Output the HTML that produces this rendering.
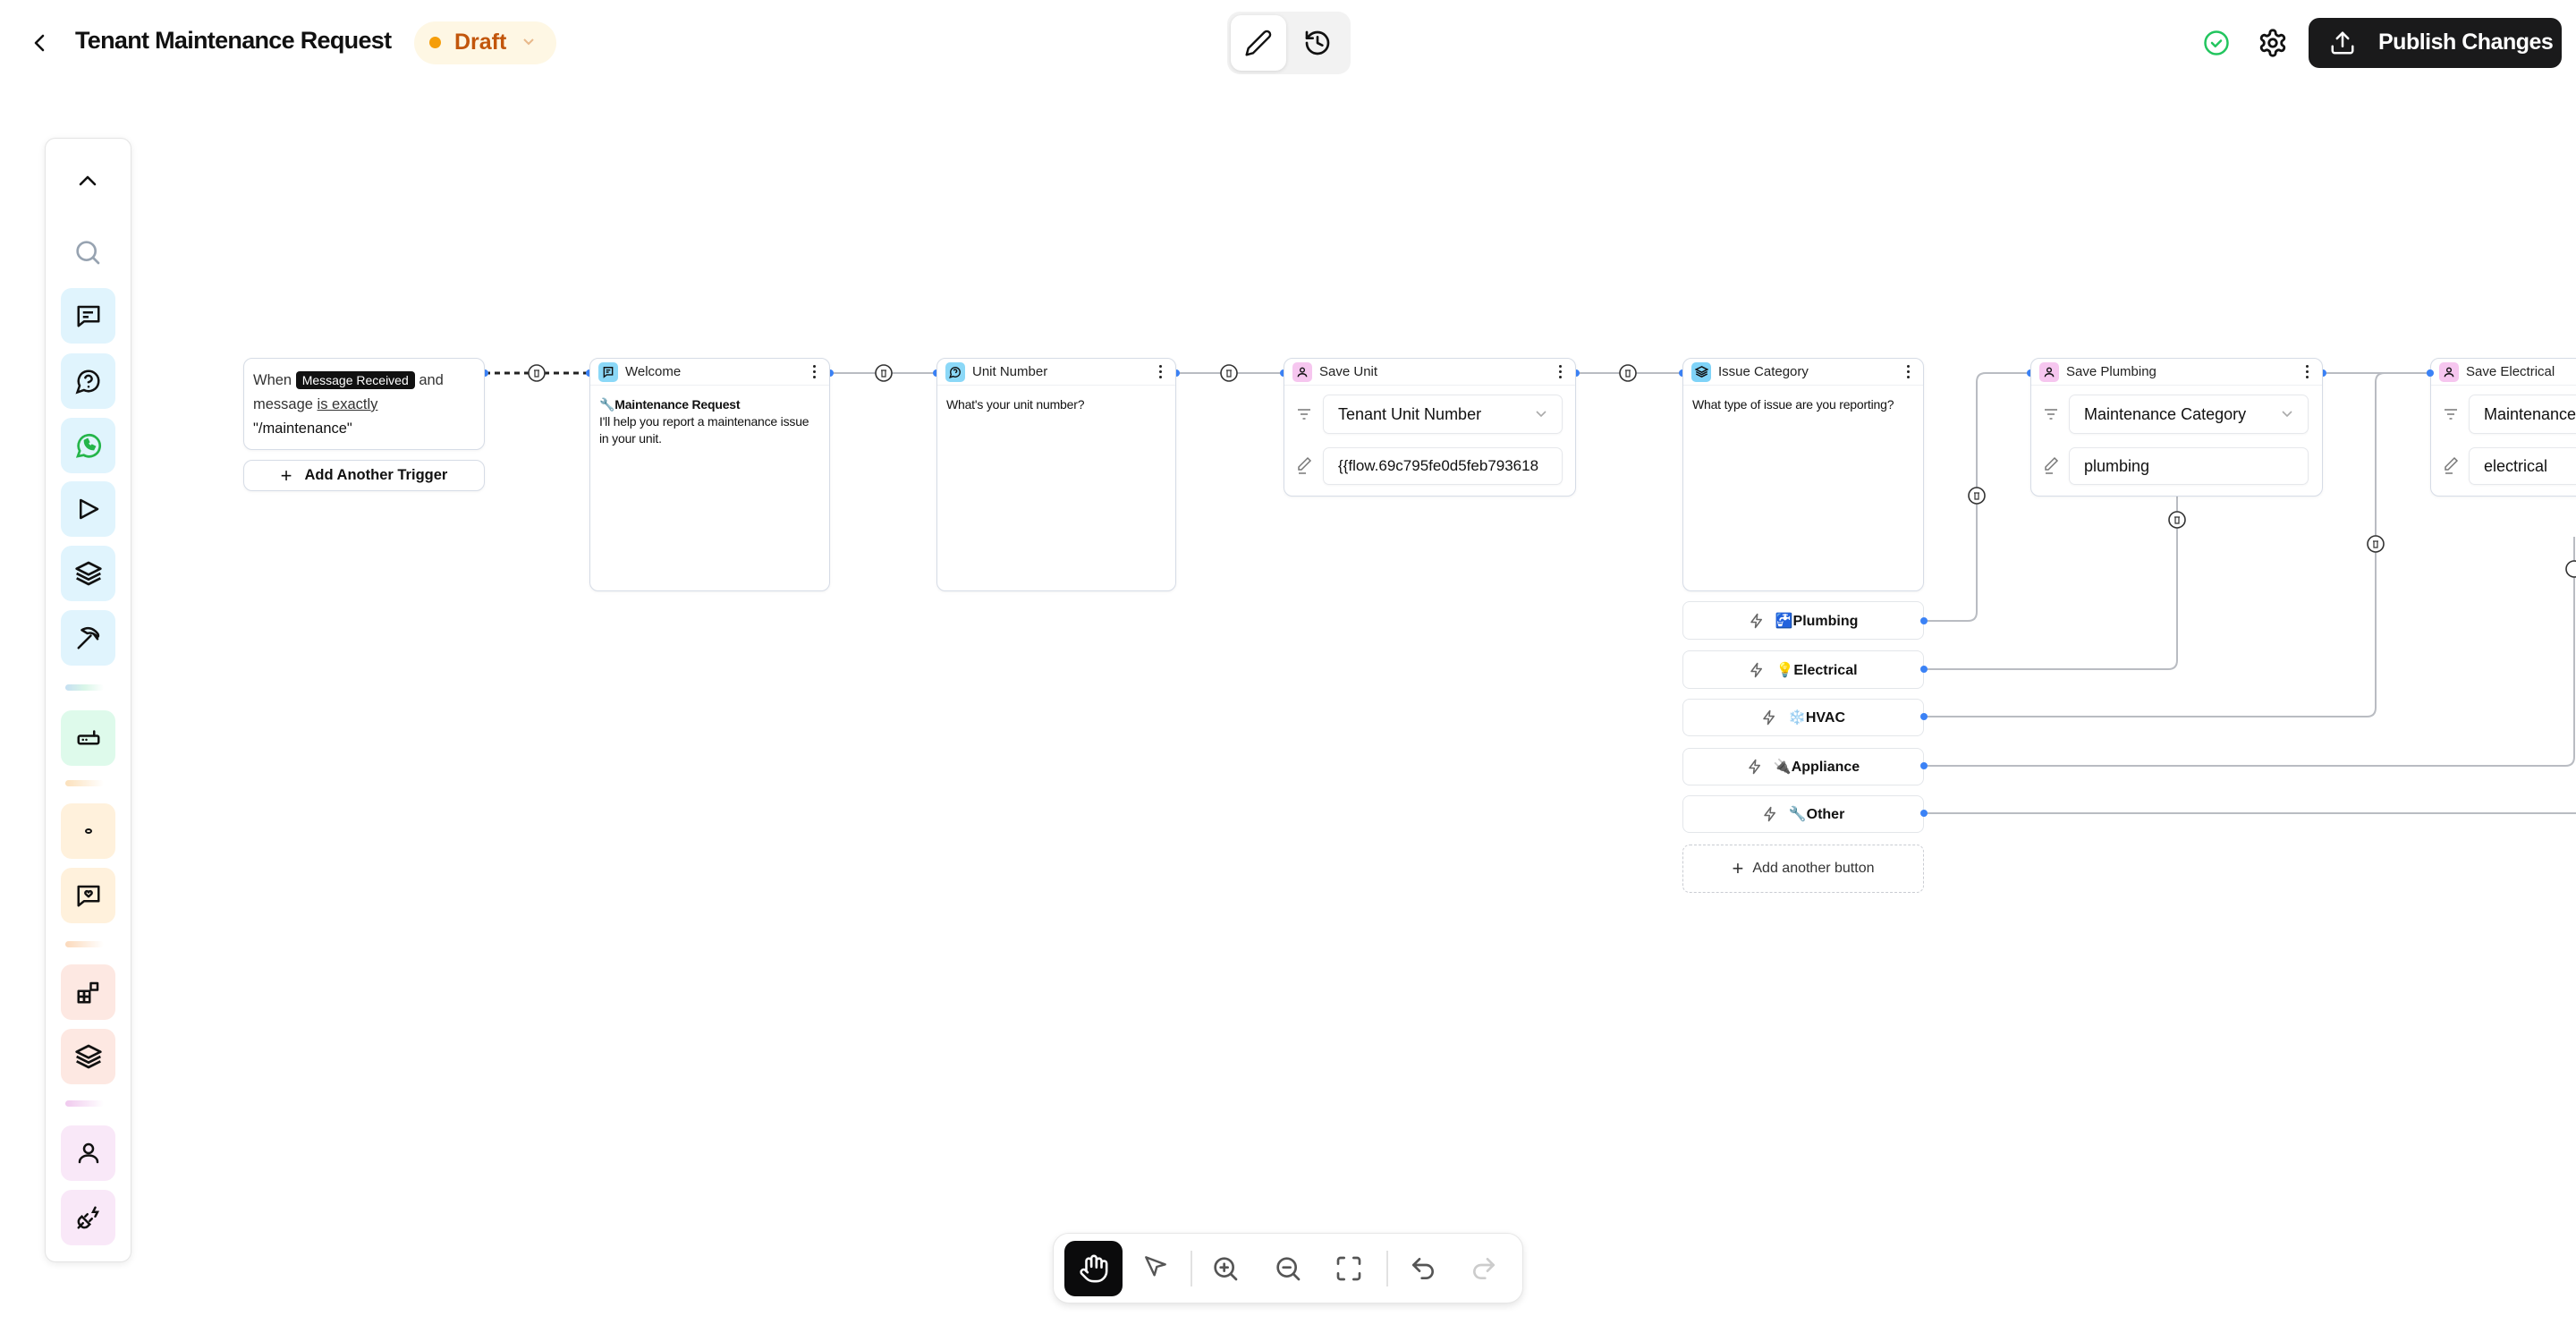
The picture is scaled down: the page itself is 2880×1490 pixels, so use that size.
<!DOCTYPE html>
<html><head><meta charset="utf-8"><style>
*{box-sizing:border-box;margin:0;padding:0}
body{width:2880px;height:1490px;background:#fff;font-family:"Liberation Sans","DejaVu Sans",sans-serif;color:#111;position:relative;overflow:hidden}
.a{position:absolute}
.node{position:absolute;background:#fff;border:1.5px solid #d6dce6;border-radius:10px;box-shadow:0 1px 3px rgba(0,0,0,.05)}
.hdr{height:30px;border-bottom:1.5px solid #eef0f3;display:flex;align-items:center;padding-left:9px;font-size:15px;color:#222;position:relative}
.ico{width:22px;height:22px;border-radius:5px;margin-right:8px;display:flex;align-items:center;justify-content:center}
.dots{position:absolute;right:14px;top:7px;width:4px}
.dots i{display:block;width:3px;height:3px;background:#222;border-radius:50%;margin-bottom:3px}
.body{padding:12px 10px;font-size:14px;line-height:19px;color:#111;letter-spacing:-.2px}
.fld{position:absolute;background:#fff;border:1.5px solid #e6e8ec;border-radius:7px;font-size:18px;display:flex;align-items:center;padding-left:16px;overflow:hidden;white-space:nowrap;box-shadow:0 1px 2px rgba(0,0,0,.04)}
.btn{position:absolute;left:1881px;width:270px;background:#fff;border:1.5px solid #e3e6ea;border-radius:8px;display:flex;align-items:center;justify-content:center;font-size:16px;font-weight:bold;color:#111}
.btn svg{margin-right:12px}
.sb{position:absolute;left:68px;width:61px;height:62px;border-radius:12px;display:flex;align-items:center;justify-content:center}
.bar{position:absolute;left:73px;width:43px;height:7px;border-radius:4px}
</style></head><body>

<!-- header -->
<svg class="a" style="left:34px;top:36px" width="22" height="24" viewBox="0 0 22 24"><path d="M14 4 L6 12 L14 20" fill="none" stroke="#111" stroke-width="2.6" stroke-linecap="round" stroke-linejoin="round"/></svg>
<div class="a" style="left:84px;top:30px;font-size:27px;font-weight:bold;letter-spacing:-.7px;white-space:nowrap">Tenant Maintenance Request</div>
<div class="a" style="left:463px;top:24px;width:159px;height:48px;border-radius:24px;background:#fef7e4"></div>
<div class="a" style="left:480px;top:41px;width:13px;height:13px;border-radius:50%;background:#f59e0b"></div>
<div class="a" style="left:508px;top:33px;font-size:25px;font-weight:bold;color:#c2560c">Draft</div>
<svg class="a" style="left:582px;top:40px" width="18" height="14" viewBox="0 0 18 14"><path d="M4 4 L9 9 L14 4" fill="none" stroke="#e8b88a" stroke-width="2"/></svg>

<div class="a" style="left:1372px;top:13px;width:138px;height:70px;border-radius:14px;background:#f2f2f2"></div>
<div class="a" style="left:1376px;top:17px;width:62px;height:62px;border-radius:12px;background:#fff;box-shadow:0 1px 4px rgba(0,0,0,.12)"></div>
<svg class="a" style="left:1391px;top:32px" width="32" height="32" viewBox="0 0 24 24" fill="none" stroke="#111" stroke-width="1.8" stroke-linecap="round" stroke-linejoin="round"><path d="M17 3a2.8 2.8 0 0 1 4 4L7.5 20.5 2 22l1.5-5.5Z"/></svg>
<svg class="a" style="left:1457px;top:32px" width="32" height="32" viewBox="0 0 24 24" fill="none" stroke="#111" stroke-width="2" stroke-linecap="round" stroke-linejoin="round"><path d="M3 12a9 9 0 1 0 9-9 9.75 9.75 0 0 0-6.74 2.74L3 8"/><path d="M3 3v5h5"/><path d="M12 7v5l4 2"/></svg>

<svg class="a" style="left:2463px;top:33px" width="30" height="30" viewBox="0 0 24 24" fill="none" stroke="#22c55e" stroke-width="2" stroke-linecap="round" stroke-linejoin="round"><circle cx="12" cy="12" r="10"/><path d="m8 12 3 3 5-5"/></svg>
<svg class="a" style="left:2524px;top:31px" width="34" height="34" viewBox="0 0 24 24" fill="none" stroke="#111" stroke-width="2" stroke-linecap="round" stroke-linejoin="round"><path d="M12.22 2h-.44a2 2 0 0 0-2 2v.18a2 2 0 0 1-1 1.73l-.43.25a2 2 0 0 1-2 0l-.15-.08a2 2 0 0 0-2.730.73l-.22.38a2 2 0 0 0 .73 2.73l.15.1a2 2 0 0 1 1 1.72v.51a2 2 0 0 1-1 1.74l-.15.09a2 2 0 0 0-.73 2.73l.22.38a2 2 0 0 0 2.73.73l.15-.08a2 2 0 0 1 2 0l.43.25a2 2 0 0 1 1 1.73V20a2 2 0 0 0 2 2h.44a2 2 0 0 0 2-2v-.18a2 2 0 0 1 1-1.73l.43-.25a2 2 0 0 1 2 0l.15.08a2 2 0 0 0 2.73-.73l.22-.39a2 2 0 0 0-.73-2.73l-.15-.08a2 2 0 0 1-1-1.74v-.5a2 2 0 0 1 1-1.74l.15-.09a2 2 0 0 0 .73-2.73l-.22-.38a2 2 0 0 0-2.73-.73l-.15.08a2 2 0 0 1-2 0l-.43-.25a2 2 0 0 1-1-1.73V4a2 2 0 0 0-2-2z"/><circle cx="12" cy="12" r="3"/></svg>
<div class="a" style="left:2581px;top:20px;width:283px;height:56px;border-radius:12px;background:#1a1a1b"></div>
<svg class="a" style="left:2604px;top:33px" width="30" height="30" viewBox="0 0 24 24" fill="none" stroke="#fff" stroke-width="2" stroke-linecap="round" stroke-linejoin="round"><path d="M21 15v4a2 2 0 0 1-2 2H5a2 2 0 0 1-2-2v-4"/><path d="M17 8l-5-5-5 5"/><path d="M12 3v12"/></svg>
<div class="a" style="left:2659px;top:33px;font-size:25px;font-weight:bold;color:#fff;letter-spacing:-.5px;white-space:nowrap">Publish Changes</div>

<!-- sidebar -->
<div class="a" style="left:50px;top:154px;width:97px;height:1257px;border:1.5px solid #e4e4e4;border-radius:12px;background:#fff;box-shadow:0 2px 8px rgba(0,0,0,.08)"></div>
<svg class="a" style="left:86px;top:191px" width="24" height="22" viewBox="0 0 24 22"><path d="M4 15 L12 7 L20 15" fill="none" stroke="#111" stroke-width="2.6" stroke-linecap="round" stroke-linejoin="round"/></svg>
<svg class="a" style="left:82px;top:266px" width="32" height="32" viewBox="0 0 24 24" fill="none" stroke="#97a3b1" stroke-width="2" stroke-linecap="round"><circle cx="11" cy="11" r="7.5"/><path d="m21 21-4.5-4.5"/></svg>
<div class="sb" style="top:322px;background:#e0f4fd"><svg width="30" height="30" viewBox="0 0 24 24" fill="none" stroke="#111" stroke-width="2" stroke-linejoin="round"><path d="M3 4h18v13H8l-5 4z"/><path d="M7 9h9M7 13h5"/></svg></div>
<div class="sb" style="top:395px;background:#e0f4fd"><svg width="30" height="30" viewBox="0 0 24 24" fill="none" stroke="#111" stroke-width="2" stroke-linecap="round"><path d="M7.9 20A9 9 0 1 0 4 16.1L2 22Z"/><path d="M9.1 9a3 3 0 0 1 5.8 1c0 2-3 3-3 3"/><path d="M12 17h.01"/></svg></div>
<div class="sb" style="top:467px;background:#e0f4fd"><svg width="32" height="32" viewBox="0 0 24 24" fill="none" stroke="#25b54a" stroke-width="2"><path d="M3 21l1.6-4.5A9 9 0 1 1 8 20Z"/><path d="M9 8c0 4 3 7 7 7l1-2-2-1-1 1c-1.5-.5-2.5-1.5-3-3l1-1-1-2z" fill="#25b54a"/></svg></div>
<div class="sb" style="top:538px;background:#e0f4fd"><svg width="30" height="30" viewBox="0 0 24 24" fill="none" stroke="#111" stroke-width="2" stroke-linejoin="round"><path d="M5 4l15 8-15 8z"/></svg></div>
<div class="sb" style="top:610px;background:#e0f4fd"><svg width="32" height="32" viewBox="0 0 24 24" fill="none" stroke="#111" stroke-width="2" stroke-linejoin="round"><path d="M12 3 2 8l10 5 10-5z"/><path d="m2 12 10 5 10-5"/><path d="m2 16 10 5 10-5"/></svg></div>
<div class="sb" style="top:682px;background:#e0f4fd"><svg width="30" height="30" viewBox="0 0 24 24" fill="none" stroke="#111" stroke-width="2" stroke-linecap="round" stroke-linejoin="round"><path d="M14 10 3 21"/><path d="M6 5c5-3 10-2 14 3 1 1 1 3 0 3-3-3-6-4-9-3z"/><path d="M17 9l3 4"/></svg></div>
<div class="bar" style="top:765px;background:linear-gradient(90deg,#c5dff2,#d9f6e8,#fff)"></div>
<div class="sb" style="top:794px;background:#defaeb"><svg width="30" height="30" viewBox="0 0 24 24" fill="none" stroke="#111" stroke-width="2" stroke-linecap="round"><rect x="3" y="10" width="18" height="7" rx="1.5"/><path d="M17 10V6M7 13.5h.01M10 13.5h.01"/></svg></div>
<div class="bar" style="top:872px;background:linear-gradient(90deg,#fbe0bb,#fff)"></div>
<div class="sb" style="top:898px;background:#fff1dc"><div style="width:8px;height:6px;border:2px solid #111;border-radius:50%"></div></div>
<div class="sb" style="top:970px;background:#fff1dc"><svg width="30" height="30" viewBox="0 0 24 24" fill="none" stroke="#111" stroke-width="2" stroke-linejoin="round"><path d="M3 4h18v13H8l-5 4z"/><path d="M12 13l-2.5-2.3a1.5 1.5 0 1 1 2.5-1.5 1.5 1.5 0 1 1 2.5 1.5z"/></svg></div>
<div class="bar" style="top:1052px;background:linear-gradient(90deg,#fbd9bb,#fff)"></div>
<div class="sb" style="top:1078px;background:#fde8e2"><svg width="30" height="30" viewBox="0 0 24 24" fill="none" stroke="#111" stroke-width="2" stroke-linejoin="round"><rect x="3" y="11" width="5" height="5"/><rect x="3" y="16" width="5" height="5"/><rect x="8" y="16" width="5" height="5"/><rect x="8" y="11" width="5" height="5"/><rect x="14" y="4" width="6" height="6"/></svg></div>
<div class="sb" style="top:1150px;background:#fde8e2"><svg width="32" height="32" viewBox="0 0 24 24" fill="none" stroke="#111" stroke-width="2" stroke-linejoin="round"><path d="M12 3 2 8l10 5 10-5z"/><path d="m2 12 10 5 10-5"/><path d="m2 16 10 5 10-5"/></svg></div>
<div class="bar" style="top:1230px;background:linear-gradient(90deg,#f0c9ee,#fff)"></div>
<div class="sb" style="top:1258px;background:#f9e8f8"><svg width="30" height="30" viewBox="0 0 24 24" fill="none" stroke="#111" stroke-width="2" stroke-linecap="round"><circle cx="12" cy="8" r="4"/><path d="M4 20c0-4 4-6 8-6s8 2 8 6"/></svg></div>
<div class="sb" style="top:1330px;background:#f9e8f8"><svg width="30" height="30" viewBox="0 0 24 24" fill="none" stroke="#111" stroke-width="2" stroke-linecap="round"><path d="M3 21l4-4"/><path d="M6 11l7 7-2 2a4 4 0 0 1-6-1 4 4 0 0 1-1-6z"/><path d="M9 11l2-2M13 15l2-2"/><path d="M18 3l-2 4h4l-2 4"/></svg></div>

<!-- edges -->
<svg class="a" style="left:0;top:0" width="2880" height="1490" fill="none">
<path d="M542 417H659" stroke="#222" stroke-width="3" stroke-dasharray="6 5"/>
<g stroke="#b9bcc2" stroke-width="2">
<path d="M928 417H1047M1315 417H1435M1762 417H1881M2597 417H2717"/>
<path d="M2151 694H2200Q2210 694 2210 684V427Q2210 417 2220 417H2270"/>
<path d="M2151 748H2424Q2434 748 2434 738V555"/>
<path d="M2151 801H2646Q2656 801 2656 791V427Q2656 417 2666 417"/>
<path d="M2151 856H2868Q2878 856 2878 846V600"/>
<path d="M2151 909H2880"/>
</g>
<g fill="#fff" stroke="#333" stroke-width="1.6">
<circle cx="600" cy="417" r="9"/><circle cx="988" cy="417" r="9"/><circle cx="1374" cy="417" r="9"/><circle cx="1820" cy="417" r="9"/><circle cx="2210" cy="554" r="9"/><circle cx="2434" cy="581" r="9"/><circle cx="2656" cy="608" r="9"/><circle cx="2878" cy="636" r="9"/>
</g>
<g stroke="#333" stroke-width="1.2">
<path d="M597 414h6M598 414v7h4v-7M985 414h6M986 414v7h4v-7M1371 414h6M1372 414v7h4v-7M1817 414h6M1818 414v7h4v-7M2207 551h6M2208 551v7h4v-7M2431 578h6M2432 578v7h4v-7M2653 605h6M2654 605v7h4v-7"/>
</g>
<g fill="#3b82f6">
<circle cx="542" cy="417" r="4"/><circle cx="659" cy="417" r="4"/><circle cx="928" cy="417" r="4"/><circle cx="1047" cy="417" r="4"/><circle cx="1315" cy="417" r="4"/><circle cx="1435" cy="417" r="4"/><circle cx="1762" cy="417" r="4"/><circle cx="1881" cy="417" r="4"/><circle cx="2270" cy="417" r="4"/><circle cx="2597" cy="417" r="4"/><circle cx="2717" cy="417" r="4"/>
</g>
</svg>

<!-- trigger -->
<div class="node" style="left:272px;top:400px;width:270px;height:103px;padding:11px 10px;font-size:16.5px;line-height:27px;color:#333">When <span style="background:#111;color:#fff;border-radius:4px;padding:2px 7px;font-size:14px">Message Received</span> and<br>message <span style="text-decoration:underline">is exactly</span><br><span style="color:#111">"/maintenance"</span></div>
<div class="node" style="left:272px;top:514px;width:270px;height:35px;display:flex;align-items:center;justify-content:center;font-size:16.5px;font-weight:bold"><span style="font-weight:normal;font-size:22px;margin-right:14px">+</span>Add Another Trigger</div>

<!-- welcome -->
<div class="node" style="left:659px;top:400px;width:269px;height:261px">
<div class="hdr"><div class="ico" style="background:#8bd8f7"><svg width="14" height="14" viewBox="0 0 24 24" fill="none" stroke="#111" stroke-width="2.4"><path d="M4 3h16v14H9l-5 4z"/><path d="M8 8h8M8 12h5"/></svg></div>Welcome<div class="dots"><i></i><i></i><i></i></div></div>
<div class="body"><b>🔧Maintenance Request</b><br>I'll help you report a maintenance issue in your unit.</div></div>

<!-- unit number -->
<div class="node" style="left:1047px;top:400px;width:268px;height:261px">
<div class="hdr"><div class="ico" style="background:#8bd8f7"><svg width="14" height="14" viewBox="0 0 24 24" fill="none" stroke="#111" stroke-width="2.4"><path d="M7.9 20A9 9 0 1 0 4 16.1L2 22Z"/><path d="M9.1 9a3 3 0 0 1 5.8 1c0 2-3 3-3 3"/></svg></div>Unit Number<div class="dots"><i></i><i></i><i></i></div></div>
<div class="body">What's your unit number?</div></div>

<!-- save unit -->
<div class="node" style="left:1435px;top:400px;width:327px;height:155px">
<div class="hdr"><div class="ico" style="background:#f6c6ef"><svg width="14" height="14" viewBox="0 0 24 24" fill="none" stroke="#111" stroke-width="2.4"><circle cx="12" cy="8" r="4"/><path d="M4 21c0-4 4-6 8-6s8 2 8 6"/></svg></div>Save Unit<div class="dots"><i></i><i></i><i></i></div></div></div>
<svg class="a" style="left:1448px;top:453px" width="20" height="20" viewBox="0 0 20 20" stroke="#777" stroke-width="1.6"><path d="M3 5h14M6 10h8M8.5 15h3"/></svg>
<div class="fld" style="left:1479px;top:441px;width:268px;height:44px">Tenant Unit Number<svg style="position:absolute;right:16px" width="14" height="10" viewBox="0 0 14 10"><path d="M2 2l5 5 5-5" fill="none" stroke="#aaa" stroke-width="1.6"/></svg></div>
<svg class="a" style="left:1448px;top:509px" width="20" height="22" viewBox="0 0 20 22" fill="none" stroke="#777" stroke-width="1.5"><path d="M14 3l3 3L7 16H4v-3z"/><path d="M4 20h8"/></svg>
<div class="fld" style="left:1479px;top:500px;width:268px;height:42px;font-size:17px">{{flow.69c795fe0d5feb793618</div>

<!-- issue category -->
<div class="node" style="left:1881px;top:400px;width:270px;height:261px">
<div class="hdr"><div class="ico" style="background:#7fd3f8"><svg width="15" height="15" viewBox="0 0 24 24" fill="none" stroke="#111" stroke-width="2.4"><path d="M12 3 2 8l10 5 10-5z"/><path d="m2 12 10 5 10-5"/><path d="m2 16 10 5 10-5"/></svg></div>Issue Category<div class="dots"><i></i><i></i><i></i></div></div>
<div class="body">What type of issue are you reporting?</div></div>

<div class="btn" style="top:672px;height:43px"><svg width="18" height="20" viewBox="0 0 24 24" fill="none" stroke="#666" stroke-width="2" stroke-linejoin="round"><path d="M13 2 4 14h7l-1 8 9-12h-7z"/></svg>🚰Plumbing</div>
<div class="btn" style="top:727px;height:43px"><svg width="18" height="20" viewBox="0 0 24 24" fill="none" stroke="#666" stroke-width="2" stroke-linejoin="round"><path d="M13 2 4 14h7l-1 8 9-12h-7z"/></svg>💡Electrical</div>
<div class="btn" style="top:781px;height:42px"><svg width="18" height="20" viewBox="0 0 24 24" fill="none" stroke="#666" stroke-width="2" stroke-linejoin="round"><path d="M13 2 4 14h7l-1 8 9-12h-7z"/></svg>❄️HVAC</div>
<div class="btn" style="top:836px;height:42px"><svg width="18" height="20" viewBox="0 0 24 24" fill="none" stroke="#666" stroke-width="2" stroke-linejoin="round"><path d="M13 2 4 14h7l-1 8 9-12h-7z"/></svg>🔌Appliance</div>
<div class="btn" style="top:889px;height:42px"><svg width="18" height="20" viewBox="0 0 24 24" fill="none" stroke="#666" stroke-width="2" stroke-linejoin="round"><path d="M13 2 4 14h7l-1 8 9-12h-7z"/></svg>🔧Other</div>
<div class="btn" style="top:944px;height:54px;border:1.5px dashed #c9ccd2;font-weight:normal;color:#333"><span style="font-size:22px;margin-right:10px">+</span>Add another button</div>
<svg class="a" style="left:0;top:0" width="2880" height="1490"><g fill="#3b82f6"><circle cx="2151" cy="694" r="4"/><circle cx="2151" cy="748" r="4"/><circle cx="2151" cy="801" r="4"/><circle cx="2151" cy="856" r="4"/><circle cx="2151" cy="909" r="4"/></g></svg>

<!-- save plumbing -->
<div class="node" style="left:2270px;top:400px;width:327px;height:155px">
<div class="hdr"><div class="ico" style="background:#f6c6ef"><svg width="14" height="14" viewBox="0 0 24 24" fill="none" stroke="#111" stroke-width="2.4"><circle cx="12" cy="8" r="4"/><path d="M4 21c0-4 4-6 8-6s8 2 8 6"/></svg></div>Save Plumbing<div class="dots"><i></i><i></i><i></i></div></div></div>
<svg class="a" style="left:2283px;top:453px" width="20" height="20" viewBox="0 0 20 20" stroke="#777" stroke-width="1.6"><path d="M3 5h14M6 10h8M8.5 15h3"/></svg>
<div class="fld" style="left:2313px;top:441px;width:268px;height:44px">Maintenance Category<svg style="position:absolute;right:16px" width="14" height="10" viewBox="0 0 14 10"><path d="M2 2l5 5 5-5" fill="none" stroke="#aaa" stroke-width="1.6"/></svg></div>
<svg class="a" style="left:2283px;top:509px" width="20" height="22" viewBox="0 0 20 22" fill="none" stroke="#777" stroke-width="1.5"><path d="M14 3l3 3L7 16H4v-3z"/><path d="M4 20h8"/></svg>
<div class="fld" style="left:2313px;top:500px;width:268px;height:42px">plumbing</div>

<!-- save electrical -->
<div class="node" style="left:2717px;top:400px;width:327px;height:155px">
<div class="hdr"><div class="ico" style="background:#f6c6ef"><svg width="14" height="14" viewBox="0 0 24 24" fill="none" stroke="#111" stroke-width="2.4"><circle cx="12" cy="8" r="4"/><path d="M4 21c0-4 4-6 8-6s8 2 8 6"/></svg></div>Save Electrical</div></div>
<svg class="a" style="left:2730px;top:453px" width="20" height="20" viewBox="0 0 20 20" stroke="#777" stroke-width="1.6"><path d="M3 5h14M6 10h8M8.5 15h3"/></svg>
<div class="fld" style="left:2760px;top:441px;width:268px;height:44px">Maintenance Category</div>
<svg class="a" style="left:2730px;top:509px" width="20" height="22" viewBox="0 0 20 22" fill="none" stroke="#777" stroke-width="1.5"><path d="M14 3l3 3L7 16H4v-3z"/><path d="M4 20h8"/></svg>
<div class="fld" style="left:2760px;top:500px;width:268px;height:42px">electrical</div>
<svg class="a" style="left:0;top:0" width="2880" height="1490"><circle cx="2717" cy="417" r="4" fill="#3b82f6"/></svg>

<!-- bottom toolbar -->
<div class="a" style="left:1177px;top:1378px;width:526px;height:79px;border-radius:18px;background:#fff;border:1.5px solid #e6e6e6;box-shadow:0 3px 8px rgba(0,0,0,.1)"></div>
<div class="a" style="left:1190px;top:1387px;width:65px;height:62px;border-radius:12px;background:#0b0b0c"></div>
<svg class="a" style="left:1206px;top:1401px" width="34" height="34" viewBox="0 0 24 24" fill="none" stroke="#fff" stroke-width="1.8" stroke-linecap="round" stroke-linejoin="round"><path d="M18 11V6a2 2 0 0 0-4 0v5"/><path d="M14 10V4a2 2 0 0 0-4 0v6"/><path d="M10 10.5V6a2 2 0 0 0-4 0v8"/><path d="M18 8a2 2 0 1 1 4 0v6a8 8 0 0 1-8 8h-2c-2.8 0-4.5-.86-5.99-2.34l-3.6-3.6a2 2 0 0 1 2.83-2.82L7 15"/></svg>
<svg class="a" style="left:1276px;top:1400px" width="32" height="32" viewBox="0 0 24 24" fill="none" stroke="#555" stroke-width="1.8" stroke-linejoin="round"><path d="M4 4l16 6-7 2-2 7z"/></svg>
<div class="a" style="left:1331px;top:1398px;width:2px;height:40px;background:#e2e2e2"></div>
<svg class="a" style="left:1354px;top:1402px" width="32" height="32" viewBox="0 0 24 24" fill="none" stroke="#555" stroke-width="2" stroke-linecap="round"><circle cx="11" cy="11" r="7.5"/><path d="m21 21-4.5-4.5M11 8v6M8 11h6"/></svg>
<svg class="a" style="left:1424px;top:1402px" width="32" height="32" viewBox="0 0 24 24" fill="none" stroke="#555" stroke-width="2" stroke-linecap="round"><circle cx="11" cy="11" r="7.5"/><path d="m21 21-4.5-4.5M8 11h6"/></svg>
<svg class="a" style="left:1492px;top:1402px" width="32" height="32" viewBox="0 0 24 24" fill="none" stroke="#555" stroke-width="2" stroke-linecap="round"><path d="M3 8V5a2 2 0 0 1 2-2h3M16 3h3a2 2 0 0 1 2 2v3M21 16v3a2 2 0 0 1-2 2h-3M8 21H5a2 2 0 0 1-2-2v-3"/></svg>
<div class="a" style="left:1550px;top:1398px;width:2px;height:40px;background:#e2e2e2"></div>
<svg class="a" style="left:1575px;top:1402px" width="32" height="32" viewBox="0 0 24 24" fill="none" stroke="#555" stroke-width="2" stroke-linecap="round" stroke-linejoin="round"><path d="M9 14 4 9l5-5"/><path d="M4 9h10.5a5.5 5.5 0 0 1 0 11H11"/></svg>
<svg class="a" style="left:1643px;top:1402px" width="32" height="32" viewBox="0 0 24 24" fill="none" stroke="#ccc" stroke-width="2" stroke-linecap="round" stroke-linejoin="round"><path d="m15 14 5-5-5-5"/><path d="M20 9H9.5a5.5 5.5 0 0 0 0 11H13"/></svg>

</body></html>
